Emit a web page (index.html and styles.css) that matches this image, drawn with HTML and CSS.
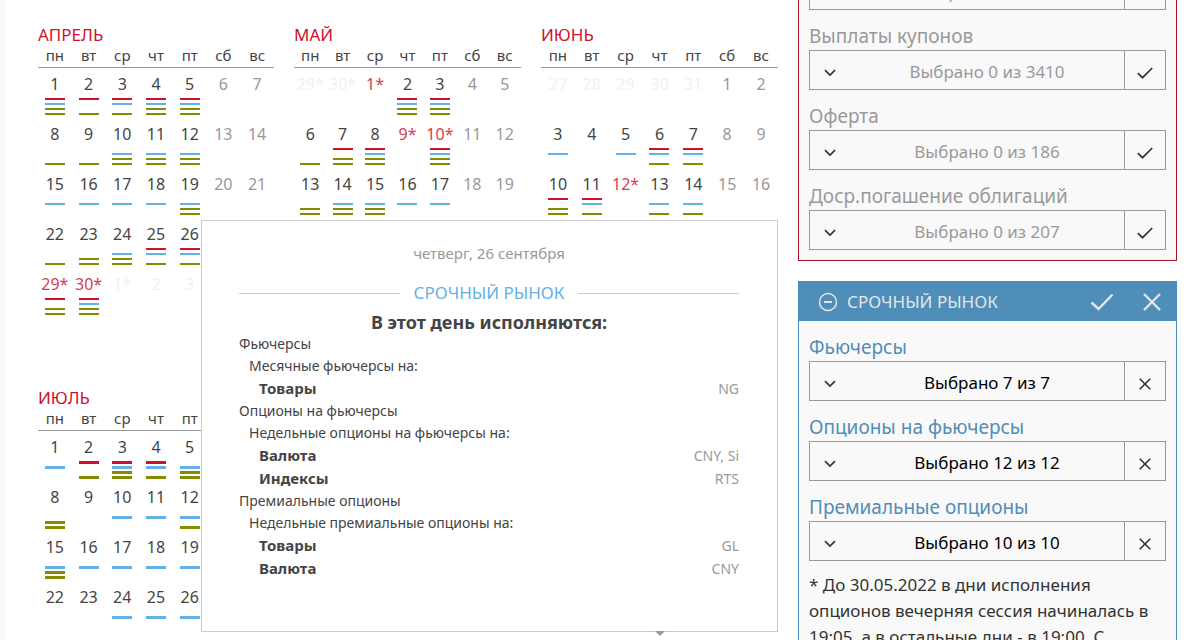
FILE: index.html
```
<!DOCTYPE html>
<html lang="ru">
<head>
<meta charset="utf-8">
<meta name="viewport" content="width=device-width, initial-scale=1">
<title>Календарь</title>
<link rel="stylesheet" href="styles.css">
</head>
<body>
<svg class="sprite" aria-hidden="true">
  <symbol id="chevron" viewBox="0 0 12 8"><path d="M1 1.2 6 6l5-4.800" fill="none" stroke="currentColor" stroke-width="1.700"/></symbol>
  <symbol id="check" viewBox="0 0 16 12"><path d="M.8 6.200 5.500 10.700 15.200 1" fill="none" stroke="currentColor" stroke-width="1.700"/></symbol>
  <symbol id="cross" viewBox="0 0 12 12"><path d="M.7.700l10.600 10.600M11.300.700.700 11.300" fill="none" stroke="currentColor" stroke-width="1.600"/></symbol>
</svg>
<div class="page">
  <main class="calendar">
    <div class="months">
      <table class="month">
        <caption>АПРЕЛЬ</caption>
        <thead><tr><th>пн</th><th>вт</th><th>ср</th><th>чт</th><th>пт</th><th>сб</th><th>вс</th></tr></thead>
        <tbody>
          <tr><td>1<i class="bars r b g o"></i></td><td>2<i class="bars r o"></i></td><td>3<i class="bars r b o"></i></td><td>4<i class="bars r b g o"></i></td><td>5<i class="bars r b g o"></i></td><td class="off">6</td><td class="off">7</td></tr>
          <tr><td>8<i class="bars o"></i></td><td>9<i class="bars o"></i></td><td>10<i class="bars b g o"></i></td><td>11<i class="bars b g o"></i></td><td>12<i class="bars b g o"></i></td><td class="off">13</td><td class="off">14</td></tr>
          <tr><td>15<i class="bars b"></i></td><td>16<i class="bars b"></i></td><td>17<i class="bars b"></i></td><td>18<i class="bars b"></i></td><td>19<i class="bars b g o"></i></td><td class="off">20</td><td class="off">21</td></tr>
          <tr><td>22<i class="bars o"></i></td><td>23<i class="bars g o"></i></td><td>24<i class="bars b g o"></i></td><td>25<i class="bars r b o"></i></td><td>26<i class="bars r b o"></i></td></tr>
          <tr><td class="holiday">29*<i class="bars r g o"></i></td><td class="holiday">30*<i class="bars r b g o"></i></td><td class="other">1*</td><td class="other">2</td><td class="other">3</td></tr>
        </tbody>
      </table>
      <table class="month">
        <caption>МАЙ</caption>
        <thead><tr><th>пн</th><th>вт</th><th>ср</th><th>чт</th><th>пт</th><th>сб</th><th>вс</th></tr></thead>
        <tbody>
          <tr><td class="other">29*</td><td class="other">30*</td><td class="holiday">1*</td><td>2<i class="bars r b g o"></i></td><td>3<i class="bars r b g o"></i></td><td class="off">4</td><td class="off">5</td></tr>
          <tr><td>6<i class="bars o"></i></td><td>7<i class="bars r g o"></i></td><td>8<i class="bars r b g o"></i></td><td class="holiday">9*</td><td class="holiday">10*<i class="bars r b g o"></i></td><td class="off">11</td><td class="off">12</td></tr>
          <tr><td>13<i class="bars g o"></i></td><td>14<i class="bars b g o"></i></td><td>15<i class="bars b g o"></i></td><td>16<i class="bars b"></i></td><td>17<i class="bars b"></i></td><td class="off">18</td><td class="off">19</td></tr>
        </tbody>
      </table>
      <table class="month">
        <caption>ИЮНЬ</caption>
        <thead><tr><th>пн</th><th>вт</th><th>ср</th><th>чт</th><th>пт</th><th>сб</th><th>вс</th></tr></thead>
        <tbody>
          <tr><td class="other">27</td><td class="other">28</td><td class="other">29</td><td class="other">30</td><td class="other">31</td><td class="off">1</td><td class="off">2</td></tr>
          <tr><td>3<i class="bars b"></i></td><td>4</td><td>5<i class="bars b"></i></td><td>6<i class="bars r b o"></i></td><td>7<i class="bars r b o"></i></td><td class="off">8</td><td class="off">9</td></tr>
          <tr><td>10<i class="bars r g o"></i></td><td>11<i class="bars r b o"></i></td><td class="holiday">12*</td><td>13<i class="bars b o"></i></td><td>14<i class="bars b o"></i></td><td class="off">15</td><td class="off">16</td></tr>
        </tbody>
      </table>
      <table class="month month-thick">
        <caption>ИЮЛЬ</caption>
        <thead><tr><th>пн</th><th>вт</th><th>ср</th><th>чт</th><th>пт</th><th></th><th></th></tr></thead>
        <tbody>
          <tr><td>1<i class="bars b"></i></td><td>2<i class="bars r o"></i></td><td>3<i class="bars r b g o"></i></td><td>4<i class="bars r b o"></i></td><td>5<i class="bars b g o"></i></td></tr>
          <tr><td>8<i class="bars g o"></i></td><td>9</td><td>10<i class="bars b"></i></td><td>11<i class="bars b"></i></td><td>12<i class="bars b o"></i></td></tr>
          <tr><td>15<i class="bars b g o"></i></td><td>16<i class="bars b"></i></td><td>17<i class="bars b"></i></td><td>18<i class="bars b"></i></td><td>19<i class="bars b"></i></td></tr>
          <tr><td>22</td><td>23</td><td>24<i class="bars b"></i></td><td>25<i class="bars b"></i></td><td>26<i class="bars b"></i></td></tr>
        </tbody>
      </table>
    </div>
    <section class="popup">
      <p class="popup-date">четверг, 26 сентября</p>
      <h2 class="popup-market">СРОЧНЫЙ РЫНОК</h2>
      <h3 class="popup-title">В этот день исполняются:</h3>
      <div class="group">Фьючерсы</div>
      <div class="subgroup">Месячные фьючерсы на:</div>
      <div class="item"><b>Товары</b><span>NG</span></div>
      <div class="group">Опционы на фьючерсы</div>
      <div class="subgroup">Недельные опционы на фьючерсы на:</div>
      <div class="item"><b>Валюта</b><span>CNY, Si</span></div>
      <div class="item"><b>Индексы</b><span>RTS</span></div>
      <div class="group">Премиальные опционы</div>
      <div class="subgroup">Недельные премиальные опционы на:</div>
      <div class="item"><b>Товары</b><span>GL</span></div>
      <div class="item"><b>Валюта</b><span>CNY</span></div>
    </section>
  </main>
  <aside class="sidebar">
    <section class="panel panel-red">
      <div class="picker"><button class="picker-main" type="button"><svg class="chevron"><use href="#chevron"/></svg><span>Выбрано 0 из 207</span></button><button class="picker-all" type="button" aria-label="Выбрать все"><svg class="check"><use href="#check"/></svg></button></div>
      <label for="coupons">Выплаты купонов</label>
      <div class="picker"><button class="picker-main" id="coupons" type="button"><svg class="chevron"><use href="#chevron"/></svg><span>Выбрано 0 из 3410</span></button><button class="picker-all" type="button" aria-label="Выбрать все"><svg class="check"><use href="#check"/></svg></button></div>
      <label for="offer">Оферта</label>
      <div class="picker"><button class="picker-main" id="offer" type="button"><svg class="chevron"><use href="#chevron"/></svg><span>Выбрано 0 из 186</span></button><button class="picker-all" type="button" aria-label="Выбрать все"><svg class="check"><use href="#check"/></svg></button></div>
      <label for="early">Доср.погашение облигаций</label>
      <div class="picker"><button class="picker-main" id="early" type="button"><svg class="chevron"><use href="#chevron"/></svg><span>Выбрано 0 из 207</span></button><button class="picker-all" type="button" aria-label="Выбрать все"><svg class="check"><use href="#check"/></svg></button></div>
    </section>
    <section class="panel panel-blue">
      <header class="panel-head">
        <button type="button" aria-label="Свернуть"><svg class="minus" viewBox="0 0 20 20"><circle cx="10" cy="10" r="8.500" fill="none" stroke="currentColor" stroke-width="1.500"/><path d="M6 10h8" stroke="currentColor" stroke-width="2"/></svg></button>
        <h2>СРОЧНЫЙ РЫНОК</h2>
        <button type="button" aria-label="Выбрать все"><svg class="head-check" viewBox="0 0 24 18"><path d="M1.500 9.500 8.500 16 22.500 1.500" fill="none" stroke="currentColor" stroke-width="2.400"/></svg></button>
        <button type="button" aria-label="Снять все"><svg class="head-cross" viewBox="0 0 18 18"><path d="M1 1l16 16M17 1 1 17" fill="none" stroke="currentColor" stroke-width="2.400"/></svg></button>
      </header>
      <label for="futures">Фьючерсы</label>
      <div class="picker"><button class="picker-main" id="futures" type="button"><svg class="chevron"><use href="#chevron"/></svg><span>Выбрано 7 из 7</span></button><button class="picker-all" type="button" aria-label="Снять все"><svg class="cross"><use href="#cross"/></svg></button></div>
      <label for="options">Опционы на фьючерсы</label>
      <div class="picker"><button class="picker-main" id="options" type="button"><svg class="chevron"><use href="#chevron"/></svg><span>Выбрано 12 из 12</span></button><button class="picker-all" type="button" aria-label="Снять все"><svg class="cross"><use href="#cross"/></svg></button></div>
      <label for="premium">Премиальные опционы</label>
      <div class="picker"><button class="picker-main" id="premium" type="button"><svg class="chevron"><use href="#chevron"/></svg><span>Выбрано 10 из 10</span></button><button class="picker-all" type="button" aria-label="Снять все"><svg class="cross"><use href="#cross"/></svg></button></div>
      <p class="note">* До 30.05.2022 в дни исполнения опционов вечерняя сессия начиналась в 19:05, а в остальные дни - в 19:00. С</p>
    </section>
  </aside>
</div>
</body>
</html>
```
FILE: styles.css
```
* { box-sizing: border-box; }
body {
  margin: 0;
  height: 100vh;
  overflow: hidden;
  background: #fff;
  color: #444;
  font-family: "Noto Sans", "DejaVu Sans Condensed", sans-serif;
  font-size: 17px;
}
button {
  margin: 0;
  padding: 0;
  border: 0;
  background: none;
  color: inherit;
  font: inherit;
  cursor: pointer;
}
h2, h3, p { margin: 0; }
svg { display: block; }
.sprite { display: none; }

.page {
  display: grid;
  grid-template-columns: minmax(0, 1fr) 379px;
  gap: 20px;
  min-height: 100vh;
  padding: 0 10px 0 33px;
  border-left: 5px solid #f9f9f9;
}

/* Months */
.calendar {
  position: relative;
  padding-top: 24px;
}
.months {
  display: grid;
  grid-template-columns: 236fr 227fr 237fr;
  gap: 69px 20px;
  align-items: start;
}
.month {
  width: 100%;
  table-layout: fixed;
  border-collapse: separate;
  border-spacing: 0;
}
.month caption {
  color: #d0112b;
  font-size: 17px;
  line-height: 22px;
  text-align: left;
}
.month th {
  height: 22px;
  padding: 0 0 2px;
  border-bottom: 1px solid #999;
  font-size: 15px;
  font-weight: 400;
  line-height: 19px;
}
.month td {
  height: 50px;
  padding: 5px 0 0;
  font-size: 16px;
  line-height: 22px;
  text-align: center;
  vertical-align: top;
  white-space: nowrap;
}
.month .off { color: #999; }
.month .holiday { color: #d63c52; }
.month .other { color: #f1f1f1; }

/* Four stacked market markers: red, blue, upper olive, lower olive */
.bars {
  --thickness: 2px;
  display: block;
  width: 20px;
  height: 18px;
  margin: 3px auto 0;
  background:
    linear-gradient(var(--red, transparent) 0 0) 0 0 / 20px var(--thickness),
    linear-gradient(var(--blue, transparent) 0 0) 0 5px / 20px var(--thickness),
    linear-gradient(var(--upper, transparent) 0 0) 0 10px / 20px var(--thickness),
    linear-gradient(var(--lower, transparent) 0 0) 0 15px / 20px var(--thickness);
  background-repeat: no-repeat;
}
.month-thick .bars { --thickness: 3px; }
.bars.r { --red: #d0112b; }
.bars.b { --blue: #64b1e6; }
.bars.g { --upper: #858c00; }
.bars.o { --lower: #858c00; }

/* Day popup */
.popup {
  position: absolute;
  top: 220px;
  left: 163px;
  right: 0;
  height: 412px;
  padding: 20px 38px 0 37px;
  border: 1px solid #ccc;
  background: #fff;
  font-size: 14px;
}
.popup::after {
  content: "";
  position: absolute;
  top: 100%;
  right: 112px;
  border: 5px solid transparent;
  border-top-color: #999;
  border-bottom: 0;
}
.popup-date {
  color: #999;
  font-size: 15px;
  line-height: 24px;
  text-align: center;
}
.popup-market {
  display: flex;
  align-items: center;
  gap: 14px;
  margin-top: 16px;
  color: #64b1e6;
  font-size: 17px;
  font-weight: 400;
  line-height: 24px;
}
.popup-market::before,
.popup-market::after {
  content: "";
  flex: 1;
  height: 1px;
  background: #ccc;
}
.popup-title {
  margin-top: 6px;
  font-size: 18px;
  line-height: 22px;
  text-align: center;
}
.group, .subgroup { line-height: 22px; }
.subgroup { padding-left: 10px; }
.item {
  display: flex;
  justify-content: space-between;
  padding-left: 20px;
  line-height: 23px;
}
.item b { font-size: 15px; }
.item span { color: #999; }

/* Filters */
.sidebar { margin-top: -30px; }
.panel {
  padding: 0 10px 10px;
  border: 1px solid;
  background: #f9f9f9;
}
.panel-red {
  margin-bottom: 20px;
  border-color: #a90f26;
  border-top: 0;
  color: #999;
}
.panel-blue {
  border-color: #4f8eb8;
  color: #000;
}
.panel label {
  display: block;
  padding: 14px 0 2px;
  font-size: 19px;
  line-height: 24px;
}
.panel-blue label { color: #4f8eb8; }
.picker {
  display: flex;
  height: 40px;
  border: 1px solid #999;
}
.picker svg { color: #333; }
.picker-main {
  display: flex;
  flex: 1;
  align-items: center;
  padding: 2px 0 0 14px;
}
.picker-main span {
  flex: 1;
  padding: 0 0 0 14px;
}
.chevron { width: 12px; height: 8px; margin-top: 4px; }
.picker-all {
  display: grid;
  place-items: center;
  width: 41px;
  padding-top: 6px;
  border-left: 1px solid #999;
}
.check { width: 16px; height: 12px; }
.cross { width: 12px; height: 12px; }
.panel-head {
  display: flex;
  align-items: center;
  height: 40px;
  margin: -1px -11px 0;
  padding: 2px 16px 0 20px;
  background: #4f8eb8;
  color: #e2e6e9;
}
.panel-head h2 {
  flex: 1;
  padding-left: 9px;
  font-size: 17px;
  font-weight: 400;
  line-height: 24px;
}
.minus { width: 20px; height: 20px; }
.head-check { width: 24px; height: 18px; margin-right: 29px; }
.head-cross { width: 18px; height: 18px; }
.note {
  padding-top: 11px;
  color: #333;
  line-height: 26px;
}
```
